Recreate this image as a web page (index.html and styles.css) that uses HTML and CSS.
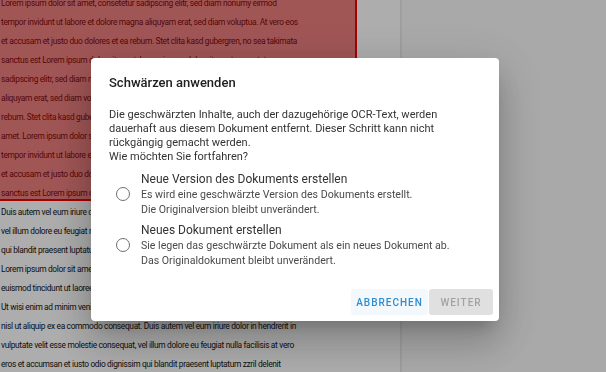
FILE: index.html
```html
<!DOCTYPE html>
<html lang="de">
<head>
    <meta charset="UTF-8">
    <meta name="viewport" content="width=device-width, initial-scale=1.0">
    <title>Schwärzen anwenden</title>
    <link rel="stylesheet" href="styles.css">
</head>
<body>
    <div class="viewer">
        <div class="page">
            <div class="doc-text">
                <div class="line">Lorem ipsum dolor sit amet, consetetur sadipscing elitr, sed diam nonumy eirmod</div>
                <div class="line">tempor invidunt ut labore et dolore magna aliquyam erat, sed diam voluptua. At vero eos</div>
                <div class="line">et accusam et justo duo dolores et ea rebum. Stet clita kasd gubergren, no sea takimata</div>
                <div class="line">sanctus est Lorem ipsum dolor sit amet. Lorem ipsum dolor sit amet, consetetur</div>
                <div class="line">sadipscing elitr, sed diam nonumy eirmod tempor invidunt ut labore et dolore magna</div>
                <div class="line">aliquyam erat, sed diam voluptua. At vero eos et accusam et justo duo dolores et ea</div>
                <div class="line">rebum. Stet clita kasd gubergren, no sea takimata sanctus est Lorem ipsum dolor sit</div>
                <div class="line">amet. Lorem ipsum dolor sit amet, consetetur sadipscing elitr, sed diam nonumy eirmod</div>
                <div class="line">tempor invidunt ut labore et dolore magna aliquyam erat, sed diam voluptua. At vero eos</div>
                <div class="line">et accusam et justo duo dolores et ea rebum. Stet clita kasd gubergren, no sea takimata</div>
                <div class="line">sanctus est Lorem ipsum dolor sit amet.</div>
                <div class="line">Duis autem vel eum iriure dolor in hendrerit in vulputate velit esse molestie consequat,</div>
                <div class="line">vel illum dolore eu feugiat nulla facilisis at vero eros et accumsan et iusto odio dignissim</div>
                <div class="line">qui blandit praesent luptatum zzril delenit augue duis dolore te feugait nulla facilisi.</div>
                <div class="line">Lorem ipsum dolor sit amet, consectetuer adipiscing elit, sed diam nonummy nibh</div>
                <div class="line">euismod tincidunt ut laoreet dolore magna aliquam erat volutpat.</div>
                <div class="line">Ut wisi enim ad minim veniam, quis nostrud exerci tation ullamcorper suscipit lobortis</div>
                <div class="line">nisl ut aliquip ex ea commodo consequat. Duis autem vel eum iriure dolor in hendrerit in</div>
                <div class="line">vulputate velit esse molestie consequat, vel illum dolore eu feugiat nulla facilisis at vero</div>
                <div class="line">eros et accumsan et iusto odio dignissim qui blandit praesent luptatum zzril delenit</div>
            </div>
            <!-- markierter Bereich -->
            <div class="redaction"></div>
        </div>
        <div class="viewer-rest"></div>
    </div>

    <div class="backdrop">
        <div class="dialog">
            <h2 class="dialog-title">Schwärzen anwenden</h2>
            <p class="dialog-text">
                Die geschwärzten Inhalte, auch der dazugehörige OCR-Text, werden<br>
                dauerhaft aus diesem Dokument entfernt. Dieser Schritt kann nicht<br>
                rückgängig gemacht werden.<br>
                Wie möchten Sie fortfahren?
            </p>
            <div class="options">
                <label class="option">
                    <span class="radio"></span>
                    <span class="option-text">
                        <span class="option-label">Neue Version des Dokuments erstellen</span>
                        <span class="option-hint">Es wird eine geschwärzte Version des Dokuments erstellt.</span>
                        <span class="option-hint">Die Originalversion bleibt unverändert.</span>
                    </span>
                </label>
                <label class="option">
                    <span class="radio"></span>
                    <span class="option-text">
                        <span class="option-label">Neues Dokument erstellen</span>
                        <span class="option-hint">Sie legen das geschwärzte Dokument als ein neues Dokument ab.</span>
                        <span class="option-hint">Das Originaldokument bleibt unverändert.</span>
                    </span>
                </label>
            </div>
            <div class="dialog-actions">
                <button class="btn btn-cancel">Abbrechen</button>
                <button class="btn btn-next" disabled>Weiter</button>
            </div>
        </div>
    </div>
</body>
</html>
```

FILE: styles.css
```css
body {
    margin: 0;
    padding: 0;
    overflow: hidden;
    font-family: Roboto, "Liberation Sans", sans-serif;
    background-color: #fafafa;
}

.viewer {
    display: flex;
    height: 372px;
}

.page {
    position: relative;
    width: 400px;
    flex-shrink: 0;
    background-color: #fff;
    border-right: 2px solid #eaeaea;
    overflow: hidden;
}

.viewer-rest {
    flex: 1;
    background-color: #fafafa;
}

.doc-text {
    margin-top: -6px;
    padding-left: 1px;
    font-size: 8.4px;
    line-height: 19px;
    letter-spacing: -0.34px;
    color: #141414;
    white-space: nowrap;
}

.redaction {
    position: absolute;
    left: -4px;
    top: -4px;
    width: 361px;
    height: 205px;
    box-sizing: border-box;
    background-color: rgba(220, 0, 0, 0.5);
    border-right: 2px solid #f00000;
    border-bottom: 2px solid #f00000;
}

.backdrop {
    position: fixed;
    inset: 0;
    display: flex;
    align-items: flex-start;
    padding: 58px 0 0 91px;
    background-color: rgba(0, 0, 0, 0.32);
}

.dialog {
    width: 408px;
    box-sizing: border-box;
    padding: 15px 6px 6px 18px;
    background-color: #fff;
    border-radius: 4px;
    box-shadow: 0 11px 15px -7px rgba(0,0,0,0.2), 0 24px 38px 3px rgba(0,0,0,0.14), 0 9px 46px 8px rgba(0,0,0,0.12);
}

.dialog-title {
    margin: 0 0 15px;
    font-size: 13px;
    font-weight: 500;
    line-height: 20px;
    color: #212121;
}

.dialog-text {
    margin: 0;
    font-size: 11px;
    line-height: 14px;
    color: #333;
}

.options {
    display: flex;
    flex-direction: column;
    gap: 5px;
    margin-top: 7px;
}

.option {
    display: flex;
    align-items: center;
    gap: 11px;
    padding-left: 7px;
    cursor: pointer;
}

.radio {
    width: 14px;
    height: 14px;
    box-sizing: border-box;
    border: 1.6px solid #707070;
    border-radius: 50%;
    flex-shrink: 0;
}

.option-text {
    display: flex;
    flex-direction: column;
}

.option-label {
    font-size: 12px;
    line-height: 16px;
    color: #333;
}

.option-hint {
    font-size: 10.6px;
    line-height: 15px;
    color: #4a4a4a;
}

.dialog-actions {
    display: flex;
    justify-content: flex-end;
    gap: 1px;
    margin-top: 21px;
}

.btn {
    height: 26px;
    padding: 0;
    border: none;
    border-radius: 3px;
    font-family: Roboto, "Liberation Sans", sans-serif;
    font-size: 10px;
    font-weight: 500;
    letter-spacing: 1px;
    text-transform: uppercase;
    cursor: pointer;
}

.btn-cancel {
    width: 77px;
    background-color: #f3f8fc;
    color: #2e8ccf;
}

.btn-next {
    width: 64px;
    background-color: #e0e0e0;
    color: #a2a2a2;
}
```
